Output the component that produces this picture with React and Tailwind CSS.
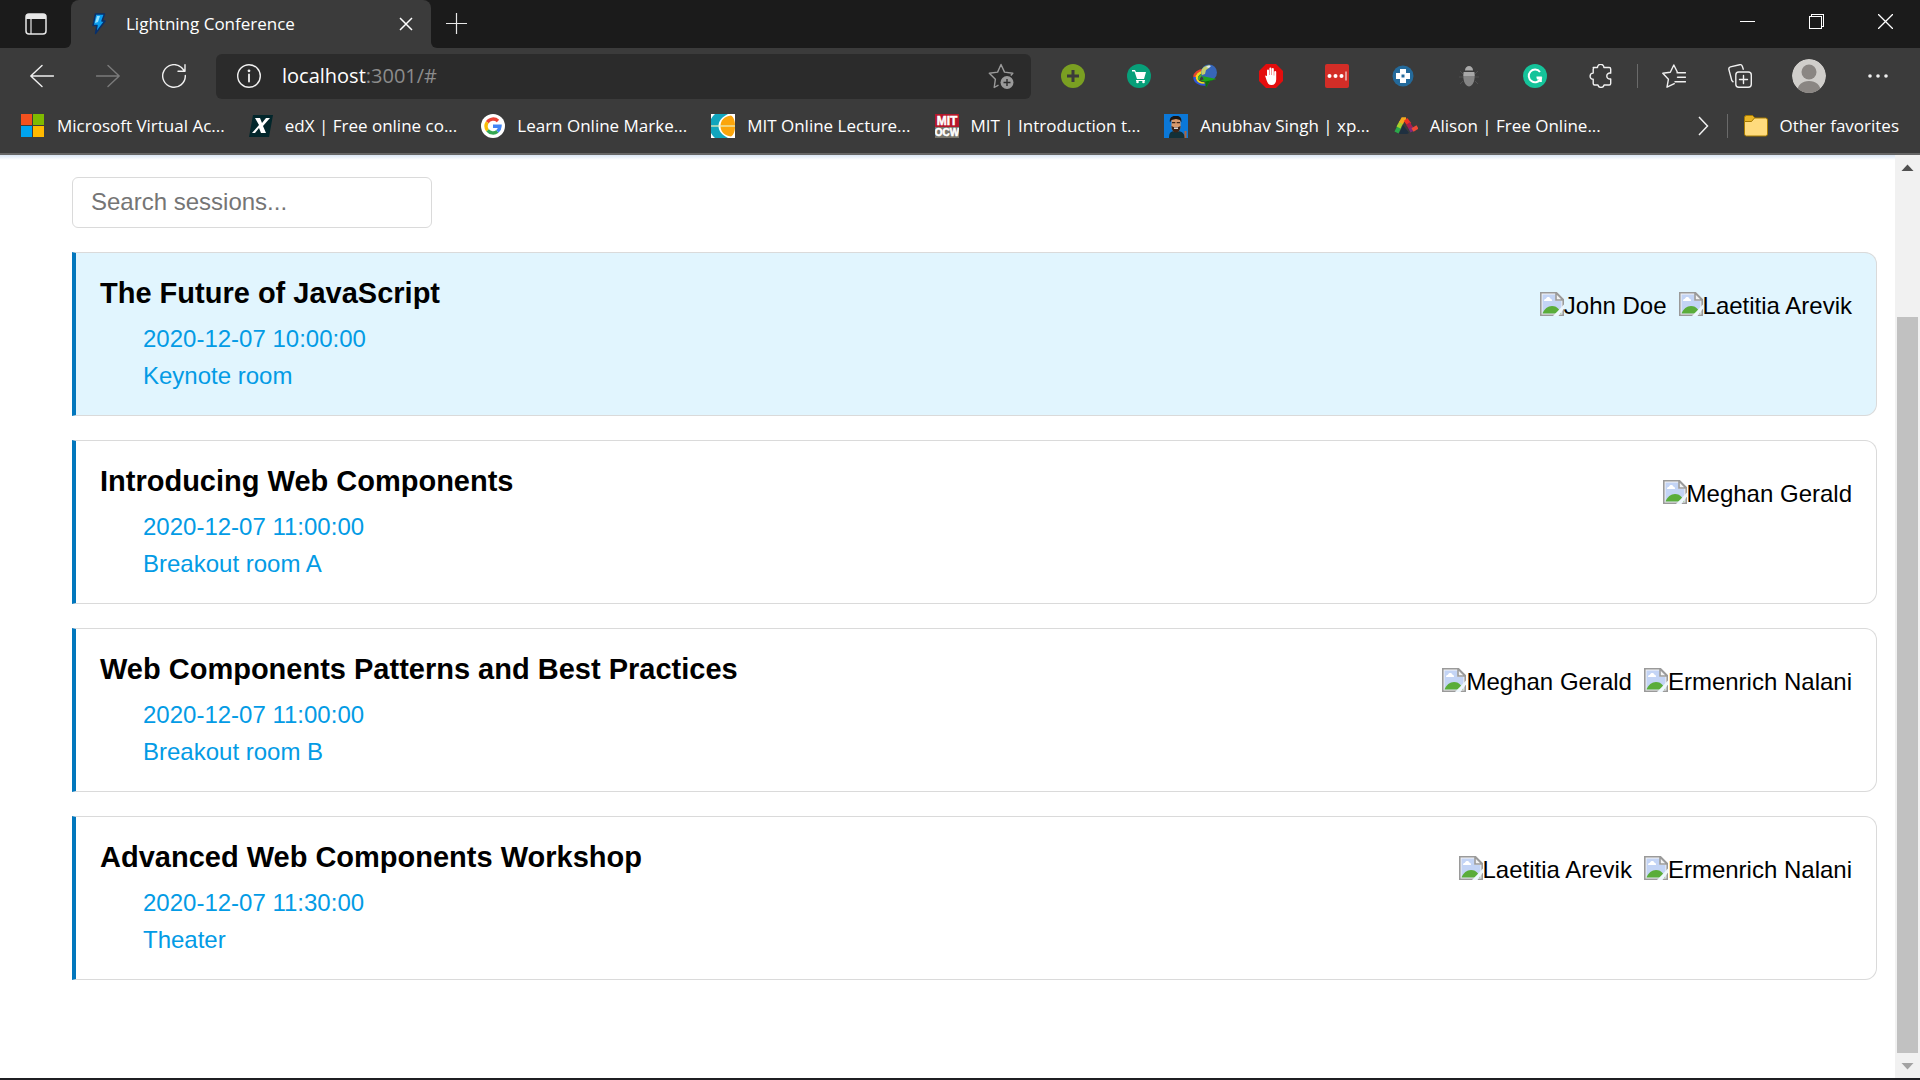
import { useState } from "react";

const SESSIONS = [
  {
    title: "The Future of JavaScript",
    date: "2020-12-07 10:00:00",
    room: "Keynote room",
    speakers: ["John Doe", "Laetitia Arevik"],
  },
  {
    title: "Introducing Web Components",
    date: "2020-12-07 11:00:00",
    room: "Breakout room A",
    speakers: ["Meghan Gerald"],
  },
  {
    title: "Web Components Patterns and Best Practices",
    date: "2020-12-07 11:00:00",
    room: "Breakout room B",
    speakers: ["Meghan Gerald", "Ermenrich Nalani"],
  },
  {
    title: "Advanced Web Components Workshop",
    date: "2020-12-07 11:30:00",
    room: "Theater",
    speakers: ["Laetitia Arevik", "Ermenrich Nalani"],
  },
];

// 24px line icon used across the toolbar
const Line = ({ children, className = "size-6" }) => (
  <svg viewBox="0 0 24 24" className={className} fill="none" stroke="currentColor" strokeWidth="1.4" strokeLinecap="round" strokeLinejoin="round" aria-hidden="true">
    {children}
  </svg>
);

const Glyph = ({ children }) => (
  <svg viewBox="0 0 24 24" className="size-6 shrink-0" aria-hidden="true">
    {children}
  </svg>
);

const BOOKMARKS = [
  {
    label: "Microsoft Virtual Ac...",
    icon: (
      <>
        <path fill="#f4511e" d="M0 0h11v11H0z" />
        <path fill="#7fba00" d="M12 0h11v11H12z" />
        <path fill="#00a4ef" d="M0 12h11v11H0z" />
        <path fill="#ffb900" d="M12 12h11v11H12z" />
      </>
    ),
  },
  {
    label: "edX | Free online co...",
    icon: (
      <>
        <path fill="#02262b" d="M4 1h20l-4 22H0z" />
        <path fill="#fff" d="M6 4h5l2 5 4-5h4l-7 8 3 7h-5l-2-5-4 5H3l7-8z" />
      </>
    ),
  },
  {
    label: "Learn Online Marke...",
    icon: (
      <>
        <circle cx="12" cy="12" r="12" fill="#fff" />
        <g fill="none" strokeWidth="3.4">
          <path stroke="#ea4335" d="M6.3 8.2A7 7 0 0 1 17 7" />
          <path stroke="#fbbc05" d="M6.6 16.4a7 7 0 0 1-.3-8.2" />
          <path stroke="#34a853" d="M16.4 17.4a7 7 0 0 1-9.8-1" />
          <path stroke="#4285f4" d="M12 12.2h7a7 7 0 0 1-2.6 5.2" />
        </g>
      </>
    ),
  },
  {
    label: "MIT Online Lecture...",
    icon: (
      <>
        <path fill="#fff" d="M0 0h24v24H0z" />
        <path fill="#12a5bd" d="M4 0h13C11 3 7.500 7 7.500 12s3.500 9 9.500 12H4C2 22 1 21 0 19V5C1 3 2 2 4 0z" />
        <path fill="#fba50c" d="M20 1.500c-7 1-10.500 5-10.500 10.500S13 21.500 20 22.500c3-2 4-6 4-10.500s-1-8.500-4-10.500z" />
        <path stroke="#e9edb8" strokeWidth="1.300" d="M0 12h24" />
      </>
    ),
  },
  {
    label: "MIT | Introduction t...",
    icon: (
      <>
        <path fill="#b5182b" d="M0 0h24v13H0z" />
        <path fill="#77756b" d="M0 13h24v11H0z" />
        <g fill="#fff" stroke="#fff" strokeWidth=".5" fontFamily="Liberation Sans, Arial, sans-serif" fontWeight="700" textAnchor="middle">
          <text x="12" y="11" fontSize="12">MIT</text>
          <text x="12" y="22" fontSize="10">OCW</text>
        </g>
      </>
    ),
  },
  {
    label: "Anubhav Singh | xp...",
    icon: (
      <>
        <path fill="#0b78d8" d="M0 0h24v24H0z" />
        <path fill="#123038" d="M5 24c0-6 2-7 7-7s8 1 9 7z" />
        <path fill="#d79a6c" d="M7.500 5h9v7c0 4-2 6-4.500 6s-4.500-2-4.500-6z" />
        <path fill="#1b1512" d="M6 8.500c-1-5 2-7 6-6.500 4-.5 6 2 5.300 6.500L16 6l-4-1-4.500 1z" />
        <path fill="#3a2418" d="M8 8h3.300v1.200H8zM12.700 8H16v1.200h-3.300zM7.500 12l2 1h5l2-1c0 4-2 6.500-4.500 6.500S7.500 16 7.500 12z" />
        <path fill="#fff" d="M10 13.500h4v1.300h-4z" />
        <path fill="#b3653a" d="M20.500 17h2v7h-2z" />
      </>
    ),
  },
  {
    label: "Alison | Free Online...",
    icon: (
      <>
        <path fill="#1f3040" d="m5 20 4-9 6 8-2 1z" />
        <g fill="none" strokeWidth="4.500">
          <path stroke="#2ba84a" d="m2.500 18.500 3-6" />
          <path stroke="#a8cf2c" d="m4.500 13.500 3-5.500" />
          <path stroke="#f5a81c" d="M7 9 9 5.500h3" />
          <path stroke="#ee3124" d="m11.500 5.500 4 5" />
          <path stroke="#a81e4c" d="m14 9.500 3.500 5.500" />
          <path stroke="#7d2a7c" d="m16.500 13.500 2 4" />
          <path stroke="#ef4a35" strokeWidth="4" d="m18.500 16 5-3" />
        </g>
      </>
    ),
  },
];

const EXTENSIONS = [
  {
    name: "Add",
    icon: (
      <>
        <circle cx="12" cy="12" r="12" fill="#7a9f22" />
        <path stroke="#3b3b3b" strokeWidth="3" d="M12 6v12M6 12h12" />
      </>
    ),
  },
  {
    name: "Shopping",
    icon: (
      <>
        <circle cx="12" cy="12" r="12" fill="#079f79" />
        <path fill="#fff" d="M5 6h3l1 2h10l-2 7h-7L7.500 7.500H5z" />
        <path stroke="#fff" d="M9 16.500h9" />
        <circle cx="10.500" cy="18" r="1.300" fill="#fff" />
        <circle cx="16.500" cy="18" r="1.300" fill="#fff" />
      </>
    ),
  },
  {
    name: "Download manager",
    icon: (
      <>
        <g fill="none" strokeWidth="2.500">
          <path stroke="#e8422c" d="M11 6C5 6.500 2 9 1.300 13" />
          <path stroke="#f7d51d" d="M11 8c-5 .5-7.500 3-7.500 7" />
          <path stroke="#3fae3a" d="M12 10c-4 .5-6.500 3-6.500 6" />
          <path stroke="#2f55d9" d="M1.500 13c0 5 5 8 11 7.500" />
          <path stroke="#f7e11d" strokeWidth="1.500" d="M3.500 14c1 4 4 5 8 5" />
        </g>
        <circle cx="16" cy="8.500" r="8" fill="#3766b8" />
        <path fill="#c3cf6e" d="M9 5c2-3 6-4 8-4l-1 3-3 2-1 4-3 1c-1-2-1-4 0-6z" />
        <path fill="#d9e7f5" d="M13 3c1-1 4-1.500 5-1l-2 2z" />
        <path fill="#1fa51c" d="m9 12 14.500 3-6.500 2-4 6.500-.5-6L7 17l4-2z" />
        <path fill="#0d6a10" d="m12.500 17.500 11-2.500-6.500 2-4 6.500z" />
      </>
    ),
  },
  {
    name: "Ad blocker",
    icon: (
      <>
        <path fill="#e40d0d" d="M7 0h10l7 7v10l-7 7H7l-7-7V7z" />
        <path fill="#fff" d="M6 11.500 8 12V6.500a1 1 0 0 1 2 0V11h.4V4.500a1 1 0 0 1 2 0V11h.4V5a1 1 0 0 1 2 0v6.500h.4V8a1 1 0 0 1 2 0v7.500C17.200 19 15.500 21 12.500 21S8.500 19 7.500 16z" />
      </>
    ),
  },
  {
    name: "Password manager",
    icon: (
      <>
        <rect width="24" height="24" rx="2" fill="#d32d27" />
        <g fill="#fff">
          <circle cx="4.500" cy="12" r="2" />
          <circle cx="10.500" cy="12" r="2" />
          <circle cx="16.500" cy="12" r="2" />
          <path d="M20.500 7.500h1v9h-1z" />
        </g>
      </>
    ),
  },
  {
    name: "Cross",
    icon: (
      <>
        <circle cx="12" cy="12" r="10.500" fill="#246a9b" />
        <path fill="#fff" d="M9 5h6v4h4v6h-4v4H9v-4H5V9h4z" />
        <path fill="#246a9b" d="M10.500 10.500h3v3h-3z" />
      </>
    ),
  },
  {
    name: "Debugger",
    icon: (
      <>
        <path stroke="#505050" d="M3 7l3 3M21 7l-3 3M2 13h4M22 13h-4M3 20l3-3M21 20l-3-3" />
        <path fill="#aaa" d="M8 6.500c0-6 8-6 8 0z" />
        <path fill="#858585" d="M6.500 8h11c1 7-1 14-5.500 14.500C7.500 22 5.500 15 6.500 8z" />
        <path fill="#a8a8a8" d="M7 8h10l.5 4h-11z" />
      </>
    ),
  },
  {
    name: "Grammar",
    icon: (
      <>
        <circle cx="12" cy="12" r="12" fill="#15c39a" />
        <path fill="none" stroke="#fff" strokeWidth="2" d="M17 8a6.300 6.300 0 1 0 .8 6.500H14" />
        <path fill="none" stroke="#fff" strokeWidth="2" d="M13.500 13.500h4.300V18" />
      </>
    ),
  },
];

const ToolButton = ({ label, className = "", children }) => (
  <button type="button" aria-label={label} className={`flex h-12 w-[66px] shrink-0 items-center justify-center ${className}`}>
    {children}
  </button>
);

const WindowButton = ({ label, children }) => (
  <button type="button" aria-label={label} className="flex h-[43px] w-[69px] items-center justify-center">
    <svg viewBox="0 0 15 15" className="size-[15px]" fill="none" stroke="#fff" shapeRendering="crispEdges" aria-hidden="true">
      {children}
    </svg>
  </button>
);

const TabStrip = () => (
  <div className="flex h-12 bg-[linear-gradient(#1b1b1b_50%,#3b3b3b_50%)]">
    <div className="flex w-[71px] shrink-0 items-center justify-center rounded-br-md bg-[#1b1b1b]">
      <button type="button" aria-label="Tab actions" className="text-[#e8e8e8]">
        <svg viewBox="0 0 22 22" className="size-[22px]" fill="none" stroke="currentColor" strokeWidth="1.500" aria-hidden="true">
          <rect x="1" y="1" width="20" height="20" rx="3" />
          <path fill="currentColor" stroke="none" d="M1 6V4a3 3 0 0 1 3-3h14a3 3 0 0 1 3 3v2z" />
          <path d="M6 6v15" strokeWidth="1.200" />
        </svg>
      </button>
    </div>
    <div className="flex w-[360px] shrink-0 items-center rounded-t-lg bg-[#3b3b3b] pr-3 pl-4">
      <svg viewBox="0 0 24 24" className="size-6 shrink-0" aria-hidden="true">
        <path fill="#0c9ff0" stroke="#08306b" strokeWidth="1.500" strokeLinejoin="round" d="M8.500 2h9l-2.500 7h3L8.500 21.500l1.500-8H6z" />
        <path fill="#8fe0ff" d="m10 4-2 7 3-1 2-6z" />
      </svg>
      <span className="ml-[15px] grow text-[17px] text-white">Lightning Conference</span>
      <button type="button" aria-label="Close tab" className="flex size-[26px] items-center justify-center text-white">
        <svg viewBox="0 0 14 14" className="size-[14px]" stroke="currentColor" strokeWidth="1.500" aria-hidden="true">
          <path d="m1 1 12 12M13 1 1 13" />
        </svg>
      </button>
    </div>
    <div className="flex grow justify-between rounded-bl-md bg-[#1b1b1b]">
      <button type="button" aria-label="New tab" className="flex w-[51px] items-center justify-center pb-[2px]">
        <svg viewBox="0 0 21 21" className="size-[21px]" stroke="#e8e8e8" strokeWidth="1.200" aria-hidden="true">
          <path d="M10.500 0v21M0 10.500h21" />
        </svg>
      </button>
      <div className="flex">
        <WindowButton label="Minimize">
          <path d="M0 7.500h15" />
        </WindowButton>
        <WindowButton label="Restore">
          <path d="M.5 2.500h12v12H.5zM2.500 2.500v-2h12v12h-2" />
        </WindowButton>
        <WindowButton label="Close">
          <path shapeRendering="auto" strokeWidth="1.300" d="m0 0 15 15M15 0 0 15" />
        </WindowButton>
      </div>
    </div>
  </div>
);

const Toolbar = () => (
  <div className="flex h-14 items-center px-[9px] text-[#f0f0f0]">
    <ToolButton label="Back">
      <Line><path d="M23.500 12H.8M12 1.500.8 12 12 22.500" /></Line>
    </ToolButton>
    <ToolButton label="Forward" className="text-[#7b7b7b]">
      <Line><path d="M.5 12h22.700M12 1.500 23.200 12 12 22.500" /></Line>
    </ToolButton>
    <ToolButton label="Refresh">
      <Line><path d="M23.300 11.500A11.300 11.300 0 1 1 19.500 3.500l3 3.500M23 .8V7.200h-7" /></Line>
    </ToolButton>
    <div className="mx-[9px] flex h-[45px] grow items-center rounded-md bg-[#2b2b2b] pr-[17px] pl-[21px]">
      <button type="button" aria-label="View site information">
        <Line>
          <circle cx="12" cy="12" r="11.300" />
          <path d="M12 10.500v7" strokeWidth="1.800" />
          <circle cx="12" cy="6.800" r=".7" fill="currentColor" />
        </Line>
      </button>
      {/* host is highlighted, the rest of the address is dimmed */}
      <p className="ml-[21px] grow text-xl" aria-label="Address">
        <span className="text-white">localhost</span>
        <span className="text-[#8c8c8c]">:3001/#</span>
      </p>
      <button type="button" aria-label="Add this page to favorites" className="text-[#9a9a9a]">
        <svg viewBox="0 0 26 26" className="size-[26px]" aria-hidden="true">
          <path fill="none" stroke="currentColor" strokeWidth="1.400" strokeLinejoin="round" d="M10.500 22.200 6.200 24.500l1.200-8.300L1.300 10.300l8.300-1.200L13 1.500l3.500 7.600 8.300 1.200-2 2.200" />
          <circle cx="19" cy="19.500" r="6.500" fill="currentColor" />
          <path stroke="#2b2b2b" strokeWidth="1.400" d="M19 16v7M15.500 19.500h7" />
        </svg>
      </button>
    </div>
    {EXTENSIONS.map((ext) => (
      <ToolButton key={ext.name} label={ext.name}>
        <Glyph>{ext.icon}</Glyph>
      </ToolButton>
    ))}
    <ToolButton label="Extensions">
      <Line>
        <path d="M4.200 3.500h4.300a3.200 3.200 0 0 1 6.400 0h5.300q1.500 0 1.500 1.500v4.200a3 3 0 1 0 0 5.700v4.600q0 1.500-1.500 1.500h-5.100a3.200 3.200 0 0 1-6.200 0H5.700q-1.500 0-1.500-1.500v-4.200a3 3 0 0 1 0-6.200V5q0-1.500 1.500-1.500" />
      </Line>
    </ToolButton>
    <span className="mx-[3px] h-6 w-px bg-[#6a6a6a]" />
    <ToolButton label="Favorites">
      <Line>
        <path d="m12.300 19.700-7.300 3.500 1.400-7.900L.8 9.300l7.500-1.100L11.800 1l3.400 6.800M15 8.700h8.500M15.500 13.200h8M13 17.700h10.500" />
      </Line>
    </ToolButton>
    <ToolButton label="Collections">
      <Line>
        <rect x="7.800" y="8" width="15.500" height="15.300" rx="3" />
        <path d="M15.500 11.500v8M11.500 15.500h8M5 17.800 3.800 16.500.9 5.600Q.4 3.500 2.400 2.900L11.600.7q2-.4 2.700 1.500l1 3" />
      </Line>
    </ToolButton>
    <ToolButton label="Profile" className="mx-[3px]">
      <svg viewBox="0 0 34 34" className="size-[34px] rounded-full" aria-hidden="true">
        <circle cx="17" cy="17" r="17" fill="#d0cecb" />
        <circle cx="17" cy="13" r="7.500" fill="#8a8683" />
        <path fill="#8a8683" d="M5 34c0-8 5-12 12-12s12 4 12 12z" />
      </svg>
    </ToolButton>
    <ToolButton label="Settings and more">
      <Glyph>
        <g fill="#f0f0f0">
          <circle cx="4" cy="12" r="1.800" />
          <circle cx="12" cy="12" r="1.800" />
          <circle cx="20" cy="12" r="1.800" />
        </g>
      </Glyph>
    </ToolButton>
  </div>
);

const BookmarkBar = () => (
  <nav aria-label="Favorites bar" className="flex h-[49px] items-center pr-[21px] pb-[6px] pl-[21px] text-[17px] whitespace-nowrap text-white">
    <ul className="flex grow gap-[24px]">
      {BOOKMARKS.map((b) => (
        <li key={b.label}>
          <a href="#" className="flex items-center gap-3">
            <Glyph>{b.icon}</Glyph>
            {b.label}
          </a>
        </li>
      ))}
    </ul>
    <button type="button" aria-label="More favorites" className="mr-[18px]">
      <svg viewBox="0 0 12 20" className="h-5 w-3" fill="none" stroke="#f0f0f0" strokeWidth="1.500" aria-hidden="true">
        <path d="m2 1 8.500 9L2 19" />
      </svg>
    </button>
    <span className="mr-4 h-6 w-px bg-[#6a6a6a]" />
    <a href="#" className="flex items-center gap-3">
      <Glyph>
        <path fill="#e9b424" stroke="#a67a00" d="M.5 3.500q0-2 2-2h6l2 2v4H.5z" />
        <path fill="#ffdb7d" stroke="#a67a00" d="M.5 7.500h7l3-3.500h11q2 0 2 2v14q0 2-2 2h-19q-2 0-2-2z" />
      </Glyph>
      Other favorites
    </a>
  </nav>
);

const BrokenImage = () => (
  <svg viewBox="0 0 24 24" className="size-6 shrink-0" aria-hidden="true">
    <path fill="#f4f4f4" d="M0 0h17l7 7v17H0z" />
    <path fill="#c3d4f5" d="M2.500 2.500h13V9h6v12.500h-19z" />
    <path fill="#fff" d="M4 9c0-1.500 1-2.200 2-2.200.5-2.300 4-2.300 4.500 0C11.500 6.800 12 7.500 12 9z" />
    <path fill="#5aad3a" d="M2.500 21.500C4 17 8 14 12 14c3 0 5 1 7 3.500l2.500 4z" />
    <path fill="none" stroke="#9a9a9a" strokeWidth="1.600" d="M.8.800h15.700l6.700 6.700v15.700H.8z" />
    <path fill="#f4f4f4" stroke="#9a9a9a" strokeWidth="1.600" d="M16 1v7h7z" />
    <path fill="#eef7fd" d="M24 12.500v4L18.500 24H13z" />
  </svg>
);

const SessionCard = ({ session, selected, onSelect }) => (
  <li
    onClick={onSelect}
    className={`flex items-start justify-between rounded-r-xl border border-l-4 border-[#dadada] border-l-[#0277bd] px-6 pt-6 pb-[21px] ${selected ? "bg-[#e1f5fe]" : "bg-white"}`}
  >
    <div>
      <h2 className="text-[29px] leading-8 font-bold">{session.title}</h2>
      <div className="mt-[11px] ml-[43px] text-2xl leading-[37px] text-[#039be5]">
        <p>{session.date}</p>
        <p>{session.room}</p>
      </div>
    </div>
    <ul className="mt-[15px] flex gap-3 text-2xl leading-7">
      {session.speakers.map((name) => (
        <li key={name} className="flex items-start">
          <BrokenImage />
          {name}
        </li>
      ))}
    </ul>
  </li>
);

const Scrollbar = () => (
  <div className="flex w-[25px] shrink-0 flex-col bg-[#f1f1f1]" aria-hidden="true">
    <svg viewBox="0 0 25 25" className="size-[25px]">
      <path fill="#505050" d="m12.500 9.500 6 6.500h-12z" />
    </svg>
    <div className="grow-[137]" />
    <div className="mx-[2px] grow-[736] bg-[#c1c1c1]" />
    <svg viewBox="0 0 25 25" className="size-[25px]">
      <path fill="#a3a3a3" d="m12.500 16.500 6-6.500h-12z" />
    </svg>
  </div>
);

const App = () => {
  const [query, setQuery] = useState("");
  const [selected, setSelected] = useState(0);

  return (
    <div className="flex min-h-screen flex-col border-b-2 border-[#1f1f23] bg-white">
      <header className="border-b-2 border-[#666] bg-[#3b3b3b] font-['Open_Sans','Noto_Sans',sans-serif]">
        <TabStrip />
        <Toolbar />
        <BookmarkBar />
      </header>
      <div className="flex grow">
        <main className="grow bg-[linear-gradient(#d9e5f4,#fff_5px)] pt-[22px] pr-[18px] pl-[72px] font-['Liberation_Sans',Arial,sans-serif] text-black">
          <input
            type="search"
            aria-label="Search sessions"
            placeholder="Search sessions..."
            value={query}
            onChange={(e) => setQuery(e.target.value)}
            className="block h-[51px] w-[360px] rounded-md border border-[#dadada] bg-white px-[18px] pb-[2px] text-2xl placeholder:text-[#757575]"
          />
          <ul className="mt-6 flex flex-col gap-6">
            {SESSIONS.map((session, i) => (
              <SessionCard key={session.title} session={session} selected={i === selected} onSelect={() => setSelected(i)} />
            ))}
          </ul>
        </main>
        <Scrollbar />
      </div>
    </div>
  );
};

export default App;
